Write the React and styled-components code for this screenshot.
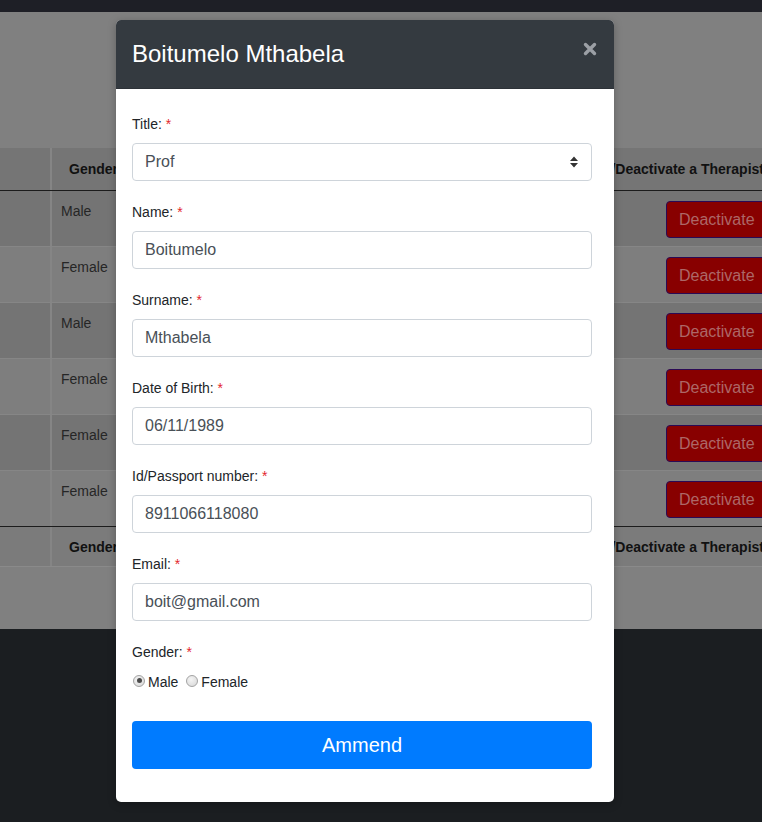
import styled, { createGlobalStyle } from "styled-components";

const GlobalStyle = createGlobalStyle`
  html, body {
    margin: 0;
    padding: 0;
    overflow: hidden;
    font-family: "Liberation Sans", Arial, sans-serif;
  }
  * {
    box-sizing: border-box;
  }
`;

//page behind the modal (already dimmed by the backdrop)
const Page = styled.div`
  position: relative;
  width: 762px;
  height: 822px;
  display: flex;
  flex-direction: column;
  overflow: hidden;
  background: #1b1e21;
`;

const TopBar = styled.div`
  height: 12px;
  background: #1e1f26;
`;

const Main = styled.section`
  background: #808080;
  padding: 136px 0 62px;
`;

const Table = styled.div`
  width: 780px;
  color: #262626;
  font-size: 14px;
`;

const Row = styled.div`
  display: grid;
  grid-template-columns: 50px 502px 228px;
  height: ${(p) => p.$height}px;
  background: ${(p) => p.$bg};
  border-bottom: 1px solid ${(p) => p.$line};
`;

const HeadCell = styled.div`
  display: flex;
  align-items: center;
  padding-left: ${(p) => p.$pad || 0}px;
  font-size: 14px;
  font-weight: bold;
  color: #111;
  white-space: nowrap;
  border-left: ${(p) => (p.$divider ? "2px solid #858585" : "none")};
`;

const Cell = styled.div`
  padding: 12px 0 0 ${(p) => p.$pad || 0}px;
  line-height: 17px;
  border-left: ${(p) => (p.$divider ? "2px solid #858585" : "none")};
`;

const DangerBtn = styled.button`
  margin: 10px 0 0 114px;
  height: 37px;
  padding: 0 12px;
  border: 1px solid #2b0a55;
  border-radius: 4px;
  background: #880000;
  color: #ad6767;
  font-family: inherit;
  font-size: 16px;
  white-space: nowrap;
`;

//modal
const Modal = styled.div`
  position: absolute;
  top: 20px;
  left: 116px;
  width: 498px;
  height: 782px;
  background: #fff;
  border-radius: 5px;
  overflow: hidden;
  box-shadow: 0 2px 8px rgba(0, 0, 0, 0.25);
`;

const ModalHeader = styled.header`
  display: flex;
  justify-content: space-between;
  align-items: flex-start;
  height: 69px;
  padding: 16px 17px 0 16px;
  background: #343a40;
  border-bottom: 1px solid #2d3238;
`;

const ModalTitle = styled.h4`
  margin: 0;
  font-size: 24px;
  font-weight: normal;
  line-height: 36px;
  color: #fff;
`;

const CloseBtn = styled.button`
  margin-top: 6px;
  padding: 0;
  border: none;
  background: none;
  display: flex;
`;

const ModalBody = styled.form`
  padding: 25px 22px 0 16px;
`;

const Group = styled.div`
  margin-bottom: 21px;
`;

const Label = styled.label`
  display: block;
  font-size: 14px;
  line-height: 21px;
  color: #212529;
  margin-bottom: 8px;
`;

const Required = styled.span`
  color: #e3262e;
`;

const Input = styled.div`
  position: relative;
  display: flex;
  align-items: center;
  height: 38px;
  padding: 0 12px;
  border: 1px solid #ced4da;
  border-radius: 4px;
  font-size: 16px;
  color: #495057;
`;

const SelectArrow = styled.svg`
  position: absolute;
  right: 13px;
  top: 12px;
`;

const RadioRow = styled.div`
  display: flex;
  align-items: center;
  height: 21px;
  font-size: 14px;
  color: #212529;
`;

const Radio = styled.span`
  position: relative;
  width: 12px;
  height: 12px;
  margin: -2px 3px 0 ${(p) => p.$offset || 1}px;
  border-radius: 50%;
  border: 1px solid #a3a3a3;
  background: radial-gradient(circle at 40% 35%, #f4f4f4, #d6d6d6);

  &::after {
    content: "";
    display: ${(p) => (p.$checked ? "block" : "none")};
    position: absolute;
    top: 2.5px;
    left: 2.5px;
    width: 5px;
    height: 5px;
    border-radius: 50%;
    background: #4a4a4a;
  }
`;

const SubmitBtn = styled.button`
  display: block;
  width: 460px;
  height: 48px;
  margin-top: 29px;
  border: none;
  border-radius: 4px;
  background: #007bff;
  color: #fff;
  font-family: inherit;
  font-size: 20px;
`;

const fields = [
  { label: "Name:", value: "Boitumelo" },
  { label: "Surname:", value: "Mthabela" },
  { label: "Date of Birth:", value: "06/11/1989" },
  { label: "Id/Passport number:", value: "8911066118080" },
  { label: "Email:", value: "boit@gmail.com" },
];

const genders = ["Male", "Female", "Male", "Female", "Female", "Female"];

const FieldLabel = ({ children }) => (
  <Label>
    {children} <Required>*</Required>
  </Label>
);

const App = () => {
  return (
    <Page>
      <GlobalStyle />
      <TopBar />
      <Main>
        <Table>
          <Row $height={43} $bg="#757575" $line="#1c1c1c">
            <HeadCell />
            <HeadCell $divider $pad={17}>
              Gender
            </HeadCell>
            <HeadCell $pad={5}>Activate/Deactivate a Therapist</HeadCell>
          </Row>
          {genders.map((g, i) => (
            <Row
              key={i}
              $height={56}
              $bg={i % 2 === 0 ? "#747474" : "#7e7e7e"}
              $line={i === genders.length - 1 ? "#1c1c1c" : "#868686"}
            >
              <Cell />
              <Cell $divider $pad={9}>
                {g}
              </Cell>
              <div>
                <DangerBtn>Deactivate</DangerBtn>
              </div>
            </Row>
          ))}
          <Row $height={40} $bg="#7b7b7b" $line="#8a8a8a">
            <HeadCell />
            <HeadCell $divider $pad={17}>
              Gender
            </HeadCell>
            <HeadCell $pad={5}>Activate/Deactivate a Therapist</HeadCell>
          </Row>
        </Table>
      </Main>

      <Modal>
        <ModalHeader>
          <ModalTitle>Boitumelo Mthabela</ModalTitle>
          <CloseBtn type="button">
            <svg width="14" height="14" viewBox="0 0 14 14">
              <path
                d="M2.5 2.5 L11.5 11.5 M11.5 2.5 L2.5 11.5"
                stroke="#9b9fa5"
                strokeWidth="3.4"
                strokeLinecap="round"
              />
            </svg>
          </CloseBtn>
        </ModalHeader>
        <ModalBody>
          <Group>
            <FieldLabel>Title:</FieldLabel>
            <Input>
              Prof
              <SelectArrow width="8" height="12" viewBox="0 0 8 12">
                <path d="M0 5 L4 0.5 L8 5 Z M0 7 L4 11.5 L8 7 Z" fill="#343434" />
              </SelectArrow>
            </Input>
          </Group>
          {fields.map((f) => (
            <Group key={f.label}>
              <FieldLabel>{f.label}</FieldLabel>
              <Input>{f.value}</Input>
            </Group>
          ))}
          <FieldLabel>Gender:</FieldLabel>
          <RadioRow>
            <Radio $checked />
            Male
            <Radio $offset={8} />
            Female
          </RadioRow>
          <SubmitBtn type="button">Ammend</SubmitBtn>
        </ModalBody>
      </Modal>
    </Page>
  );
};

export default App;
